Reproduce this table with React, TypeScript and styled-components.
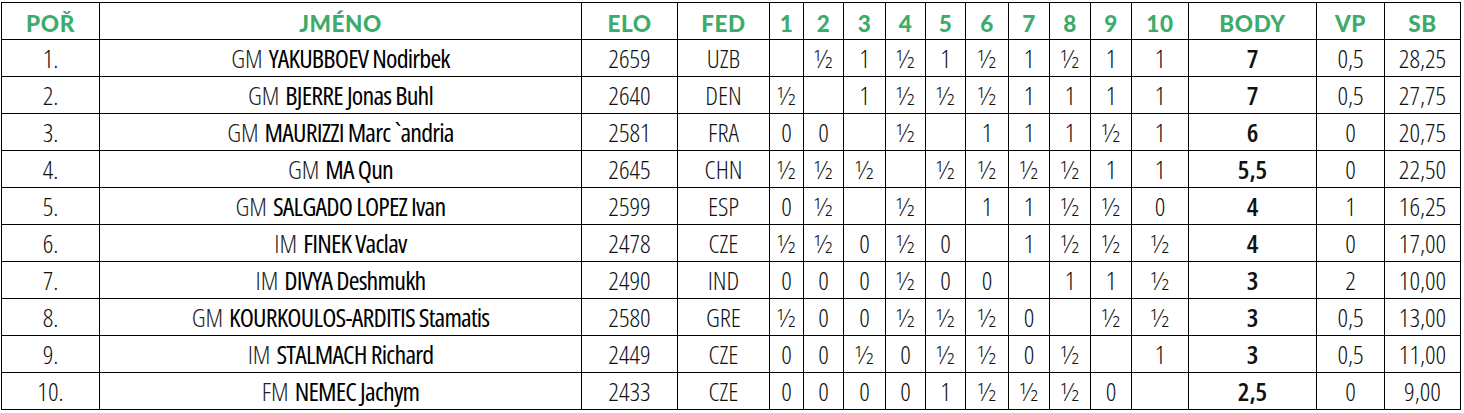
import styled, { createGlobalStyle } from 'styled-components';

// standings after round 9
const players = [
  { title: 'GM', name: 'YAKUBBOEV Nodirbek', elo: 2659, fed: 'UZB', res: ['', '½', '1', '½', '1', '½', '1', '½', '1', '1'], body: '7', vp: '0,5', sb: '28,25' },
  { title: 'GM', name: 'BJERRE Jonas Buhl', elo: 2640, fed: 'DEN', res: ['½', '', '1', '½', '½', '½', '1', '1', '1', '1'], body: '7', vp: '0,5', sb: '27,75' },
  { title: 'GM', name: 'MAURIZZI Marc `andria', elo: 2581, fed: 'FRA', res: ['0', '0', '', '½', '', '1', '1', '1', '½', '1'], body: '6', vp: '0', sb: '20,75' },
  { title: 'GM', name: 'MA Qun', elo: 2645, fed: 'CHN', res: ['½', '½', '½', '', '½', '½', '½', '½', '1', '1'], body: '5,5', vp: '0', sb: '22,50' },
  { title: 'GM', name: 'SALGADO LOPEZ Ivan', elo: 2599, fed: 'ESP', res: ['0', '½', '', '½', '', '1', '1', '½', '½', '0'], body: '4', vp: '1', sb: '16,25' },
  { title: 'IM', name: 'FINEK Vaclav', elo: 2478, fed: 'CZE', res: ['½', '½', '0', '½', '0', '', '1', '½', '½', '½'], body: '4', vp: '0', sb: '17,00' },
  { title: 'IM', name: 'DIVYA Deshmukh', elo: 2490, fed: 'IND', res: ['0', '0', '0', '½', '0', '0', '', '1', '1', '½'], body: '3', vp: '2', sb: '10,00' },
  { title: 'GM', name: 'KOURKOULOS-ARDITIS Stamatis', elo: 2580, fed: 'GRE', res: ['½', '0', '0', '½', '½', '½', '0', '', '½', '½'], body: '3', vp: '0,5', sb: '13,00' },
  { title: 'IM', name: 'STALMACH Richard', elo: 2449, fed: 'CZE', res: ['0', '0', '½', '0', '½', '½', '0', '½', '', '1'], body: '3', vp: '0,5', sb: '11,00' },
  { title: 'FM', name: 'NEMEC Jachym', elo: 2433, fed: 'CZE', res: ['0', '0', '0', '0', '1', '½', '½', '½', '0', ''], body: '2,5', vp: '0', sb: '9,00' },
];

const headers = ['POŘ', 'JMÉNO', 'ELO', 'FED', '1', '2', '3', '4', '5', '6', '7', '8', '9', '10', 'BODY', 'VP', 'SB'];

const App = () => {
  return (
    <>
      <GlobalStyle />
      <Table>
        {headers.map((h) => (
          <HeadCell key={h}>{h}</HeadCell>
        ))}
        {players.map((p, i) => (
          <Row key={p.name}>
            <Cell>{i + 1}.</Cell>
            <Cell>
              <Title>{p.title}</Title>
              <Name>{p.name}</Name>
            </Cell>
            <Cell>{p.elo}</Cell>
            <Cell>{p.fed}</Cell>
            {p.res.map((r, j) => (
              <Cell key={j}>{r}</Cell>
            ))}
            <Cell $bold>{p.body}</Cell>
            <Cell>{p.vp}</Cell>
            <Cell>{p.sb}</Cell>
          </Row>
        ))}
      </Table>
    </>
  );
};

export default App;

const GlobalStyle = createGlobalStyle`
  body {
    margin: 0;
    background: #ffffff;
  }
`;

const Table = styled.div`
  display: grid;
  grid-template-columns: 98px 482px 96px 92px 34px 40px 42px 40px 40px 43px 41px 41px 41px 57px 128px 68px 76px;
  grid-auto-rows: 37px;
  width: max-content;
  margin: 2px 0 0 1px;
  border-top: 1px solid #000;
  border-left: 1px solid #000;
`;

const Row = styled.div`
  display: contents;
`;

const HeadCell = styled.div`
  display: flex;
  align-items: center;
  justify-content: center;
  padding-top: 5px;
  box-sizing: border-box;
  border-right: 1px solid #000;
  border-bottom: 1px solid #000;
  font-family: Lato, 'Liberation Sans', sans-serif;
  font-weight: 900;
  font-size: 22.5px;
  letter-spacing: 0.6px;
  color: #3dab6b;
`;

const Cell = styled.div<{ $bold?: boolean }>`
  display: flex;
  align-items: center;
  justify-content: center;
  gap: 6px;
  box-sizing: border-box;
  border-right: 1px solid #000;
  border-bottom: 1px solid #000;
  font-family: 'Open Sans', 'Liberation Sans', sans-serif;
  font-stretch: 75%;
  font-weight: ${(p) => (p.$bold ? 600 : 300)};
  font-size: 26px;
  color: #111;
  white-space: nowrap;
`;

const Title = styled.span`
  font-weight: 300;
  color: #222;
`;

const Name = styled.span`
  font-weight: 500;
  color: #000;
  letter-spacing: -0.8px;
`;
